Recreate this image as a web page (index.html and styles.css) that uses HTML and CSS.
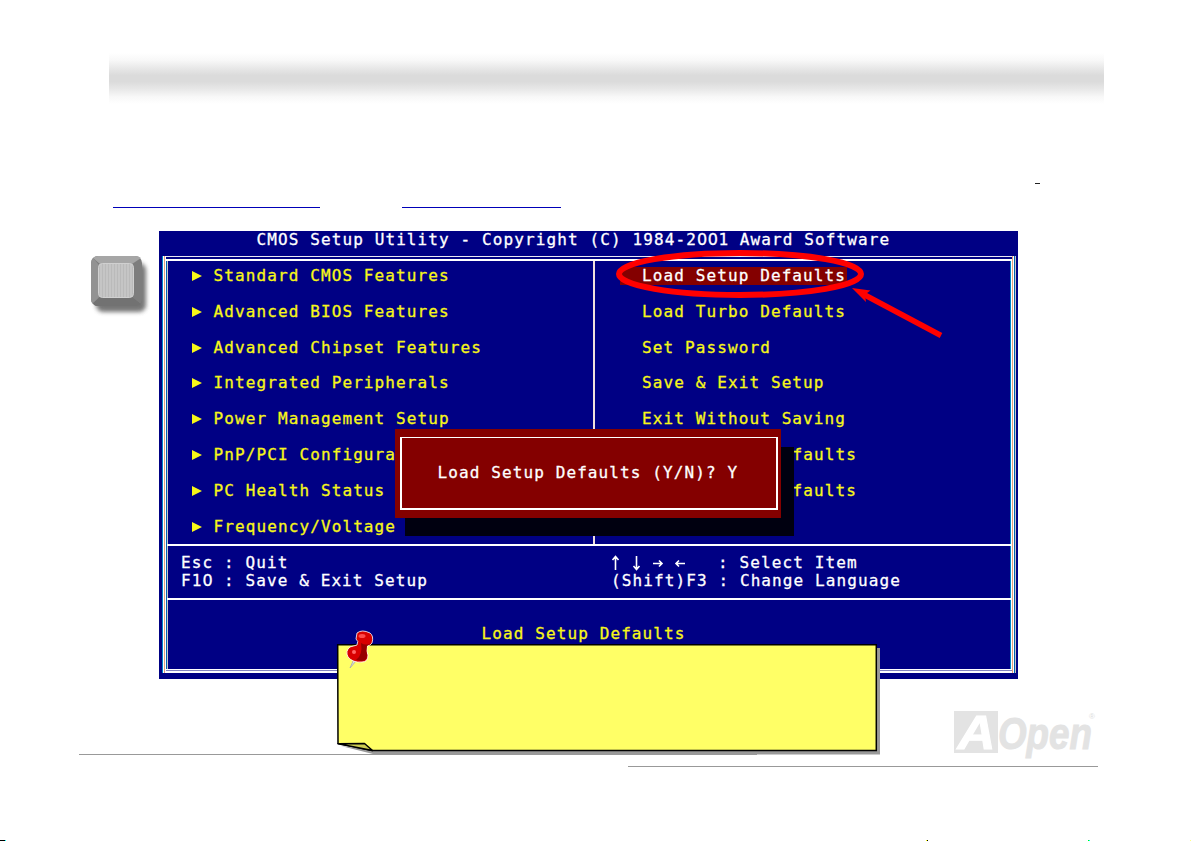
FILE: index.html
```html
<!DOCTYPE html>
<html lang="en">
<head>
<meta charset="utf-8">
<title>AOpen BIOS Setup</title>
<link rel="stylesheet" href="styles.css">
</head>
<body>
<div class="page">
  <header class="band"></header>
  <div class="links links-top"><span class="rule rule-dash"></span></div>
  <div class="links links-main"><span class="rule rule-first"></span><span class="rule rule-second"></span></div>

  <main class="stage">
    <svg class="key" width="60" height="66" viewBox="0 0 60 66">
      <defs>
        <filter id="soft" x="-20%" y="-20%" width="140%" height="140%"><feGaussianBlur stdDeviation="2"/></filter>
        <filter id="edge"><feGaussianBlur stdDeviation=".7"/></filter>
        <pattern id="ribs" width="3" height="4" patternUnits="userSpaceOnUse"><rect width="3" height="4" fill="#c5c5c5"/><rect width="1" height="4" fill="#bababa"/></pattern>
      </defs>
      <rect x="6" y="8" width="50" height="49" rx="7" fill="#555" opacity=".8" filter="url(#soft)"/>
      <rect x="1" y="1" width="51" height="50" rx="7" fill="#7d7d7d"/>
      <g filter="url(#edge)">
        <path d="M3 3Q5 1 8 1H45Q49 1 51 3L42 9H10Z" fill="#a6a6a6"/>
        <path d="M3 3Q1 5 1 8V44Q1 47 3 49L9 42V10Z" fill="#929292"/>
        <path d="M3 48L10 42H42L51 49Q49 51 46 51H7Q4 51 3 48Z" fill="#727272"/>
      </g>
      <rect x="8.500" y="8.500" width="35" height="34" rx="4" fill="url(#ribs)" stroke="#d0d0d0"/>
    </svg>

    <section class="bios">
      <h1 class="title">CMOS Setup Utility - Copyright (C) 1984-2<i class="zero">0</i><i class="zero">0</i>1 Award Software</h1>
      <div class="frame">
        <div class="menus">
          <ul class="menu menu-left">
            <li>Standard CMOS Features</li>
            <li>Advanced BIOS Features</li>
            <li>Advanced Chipset Features</li>
            <li>Integrated Peripherals</li>
            <li>Power Management Setup</li>
            <li>PnP/PCI Configura</li>
            <li>PC Health Status</li>
            <li>Frequency/Voltage</li>
          </ul>
          <ul class="menu menu-right">
            <li class="selected">Load Setup Defaults</li>
            <li>Load Turbo Defaults</li>
            <li>Set Password</li>
            <li>Save &amp; Exit Setup</li>
            <li>Exit Without Saving</li>
            <li class="tail">faults</li>
            <li class="tail">faults</li>
          </ul>
        </div>
        <div class="hints">
          <div class="hint-left"><p>Esc : Quit</p><p>F1<i class="zero">0</i> : Save &amp; Exit Setup</p></div>
          <div class="hint-right">
            <p><svg class="arrows" width="107" height="18" viewBox="0 0 107 18" fill="none" stroke="#fff" stroke-width="1.6"><path d="M4.500 16V3M1.500 6L4.500 2.500L7.500 6M25.500 2V15M22.500 12L25.500 15.500L28.500 12M42 9.500H51M48 6.500L51 9.500L48 12.500M74 9.500H65M68 6.500L65 9.500L68 12.500"/></svg>: Select Item</p>
            <p>(Shift)F3 : Change Language</p>
          </div>
        </div>
        <p class="status">Load Setup Defaults</p>
      </div>

      <div class="dialog"><div class="dialog-box">Load Setup Defaults (Y/N)? Y</div></div>

      <svg class="callout" width="340" height="100" viewBox="610 245 340 100">
        <ellipse cx="740" cy="274" rx="121" ry="21" fill="none" stroke="#f00" stroke-width="6"/>
        <path d="M941 335.500L862 293.500" stroke="#f00" stroke-width="5.500"/>
        <path d="M852 288L870.500 290.500L865 294.500L866 302Z" fill="#f00"/>
      </svg>
    </section>

    <svg class="note" width="546" height="128" viewBox="336 628 546 128">
      <path d="M341 746L373 754V754.500H880V648H876V750H372Z" fill="#999"/>
      <path d="M337.700 644.700H876.300V750.500H372L338 743.500Z" fill="#ffff66" stroke="#000" stroke-width="1.500"/>
      <path d="M338 743.700L364.500 743.500L372.500 750.500Z" fill="#cccc52" stroke="#000" stroke-width="1.500" stroke-linejoin="round"/>
      <path d="M353.500 660L350 668L356 661Z" fill="#ddd" stroke="#aaa" stroke-width=".8"/>
      <path d="M357 633Q362 629 370 633Q374 636 372 643Q370 646 367 646Q366 652 368 655Q368 662 362 662Q353 663 348 657Q345 651 350 647L357 645Q359 641 356 639Z" fill="#d90000" stroke="#fff" stroke-width=".8"/>
      <path d="M361 643Q366 646 371 643L367 646Q366 651 367 655Q367 661 361 661L356 660Q363 655 361 643Z" fill="#960000"/>
      <ellipse cx="362" cy="636" rx="3.500" ry="2" fill="#ff4a4a"/>
      <circle cx="354" cy="652" r="2" fill="#ff6565"/>
    </svg>
  </main>

  <footer class="footer">
    <svg class="logo" width="146" height="50" viewBox="952 709 146 50">
      <rect x="954" y="711" width="44" height="42" fill="#e3e3e3"/>
      <g class="logo-text">
        <text x="957.500" y="749" font-size="49" textLength="38" lengthAdjust="spacingAndGlyphs" fill="#fff" stroke="#fff">A</text>
        <text x="998" y="748.500" font-size="45" textLength="94" lengthAdjust="spacingAndGlyphs" fill="#e3e3e3" stroke="#e3e3e3">Open</text>
        <text x="1089" y="719" class="mark">®</text>
      </g>
    </svg>
    <div class="line line-upper"></div>
    <div class="line line-lower"></div>
  </footer>
  <div class="specks"></div>
</div>
</body>
</html>
```

FILE: styles.css
```css
* { box-sizing: border-box; }
body { margin: 0; background: #fff; overflow: hidden; }
h1, p, ul { margin: 0; padding: 0; font: inherit; }

.page {
  --col: 10.74px;
  --row: 17.92px;
  width: 1191px;
  height: 841px;
  padding-top: 53px;
  display: flex;
  flex-direction: column;
}
.band {
  flex: none;
  height: 51px;
  margin: 0 87px 0 109px;
  background: linear-gradient(#fff 0%, #f8f8f8 14%, #e4e4e4 34%, #dbdbdb 44%, #dbdbdb 56%, #e6e6e6 69%, #f8f8f8 86%, #fff 100%);
}
.links { flex: none; display: flex; align-items: flex-end; }
.links-top { height: 80px; padding-left: 1035px; }
.links-main { height: 24px; padding-left: 113px; gap: 82px; }
.rule { height: 1px; background: #0000b8; }
.rule-dash { width: 5px; background: #222; }
.rule-first { width: 207px; }
.rule-second { width: 159px; }

.stage {
  position: relative;
  flex: none;
  display: flex;
  height: 480px;
  padding: 23px 0 0 90px;
}
.key { flex: none; margin: 24px 9px 0 0; }

.bios {
  position: relative;
  width: 859px;
  height: 448px;
  padding: 0 2px 0 3px;
  background: #000084;
  color: #fff;
  font-family: "DejaVu Sans Mono", monospace;
  font-size: 16px;
  line-height: var(--row);
  letter-spacing: 1.108px;
  white-space: nowrap;
  -webkit-text-stroke: .3px;
}
.zero { font-family: "DejaVu Sans", sans-serif; font-style: normal; letter-spacing: .56px; }
.title { height: 25px; padding-left: 94.500px; }
.frame {
  height: 417px;
  padding: 5px 5px 4px;
  background:
    linear-gradient(#e8e8f4 0 1px, #000084 1px 3px, #fff 3px 5px) 4px 0 / 846px 5px no-repeat,
    linear-gradient(#fff 0 1px, #8484c0 1px 2px, #fff 2px 4px) 4px 100% / 846px 4px no-repeat,
    linear-gradient(90deg, #0084c6 0 1px, #fff 1px 2px, #e0a080 2px 3px, #fff 3px 4px, #0064b0 4px 5px, #c6c6c6 5px 6px) 0 0 / 6px 100% no-repeat,
    linear-gradient(90deg, #0084c6 0 1px, #fff 1px 2px, #e0a080 2px 3px, #fff 3px 4px, #0064b0 4px 5px, #c6c6c6 5px 6px) 100% 0 / 6px 100% no-repeat,
    #000084;
}
.menus {
  display: grid;
  grid-template-columns: 428px 1fr;
  height: 285px;
  border-bottom: 2px solid #fff;
}
.menu {
  display: flex;
  flex-direction: column;
  gap: var(--row);
  padding-top: 6px;
  list-style: none;
  color: #f7f718;
}
.menu-left { border-right: 2px solid #f0e0dc; padding-left: 25px; }
.menu-left li { display: flex; align-items: center; }
.menu-left li::before {
  content: "";
  margin-right: 11.500px;
  border: solid transparent;
  border-width: 5px 0 5px 10px;
  border-left-color: #f7f718;
}
.menu-right { padding-left: 25px; }
.menu-right li { width: 227px; padding-left: 22px; }
.menu-right .selected { background: #840000; color: #fff; }
.menu-right .tail { padding-left: 172.500px; width: auto; }

.hints {
  display: grid;
  grid-template-columns: 444px 1fr;
  height: 54px;
  padding-top: 7.600px;
  border-bottom: 2px solid #fff;
}
.hint-left { padding-left: 14px; }
.hint-right p { display: flex; height: var(--row); }
.arrows { flex: none; }
.status { padding: 25px 0 0 314.500px; color: #f7f718; }

.dialog {
  position: absolute;
  left: 236px;
  top: 198px;
  width: 386px;
  height: 89px;
  padding: 8px 3px 8px 5px;
  background: #840000;
  box-shadow: 13px 18px 0 #000010;
  clip-path: polygon(0 0, 386px 0, 386px 17px, 399px 17px, 399px 107px, 10px 107px, 10px 89px, 0 89px);
}
.dialog::before {
  content: "";
  position: absolute;
  z-index: -1;
  left: 10px;
  top: 89px;
  width: 20px;
  height: 18px;
  background: #000010;
}
.dialog-box {
  height: 73px;
  padding: 26px 0 0 35.500px;
  border: solid #fff;
  border-width: 1px 2px 2px;
}
.callout { position: absolute; left: 451px; top: 14px; }
.note { position: absolute; left: 336px; top: 420px; }

.footer { flex: none; height: 79px; margin-top: 21px; padding-left: 79px; }
.logo { display: block; margin-left: 873px; }
.logo-text { font-family: "Liberation Sans", Arial, sans-serif; font-weight: bold; font-style: italic; }
.mark { font-size: 8px; font-style: normal; font-weight: normal; fill: #ddd; }
.line { height: 1px; background: #999; }
.line-upper { width: 678px; margin-top: -5px; }
.line-lower { width: 470px; margin: 11px 0 0 549px; }
.specks {
  height: 1px;
  margin-top: auto;
  background: linear-gradient(90deg, #000 0 5px, #0ff 5px 6px, #fff 6px 926px, #ff0 926px 927px, #000 927px 928px, #fff 928px 1088px, #0f0 1088px 1089px, #0ff 1089px 1090px, #fff 1090px 1190px, #ffff84 1190px);
}
```
